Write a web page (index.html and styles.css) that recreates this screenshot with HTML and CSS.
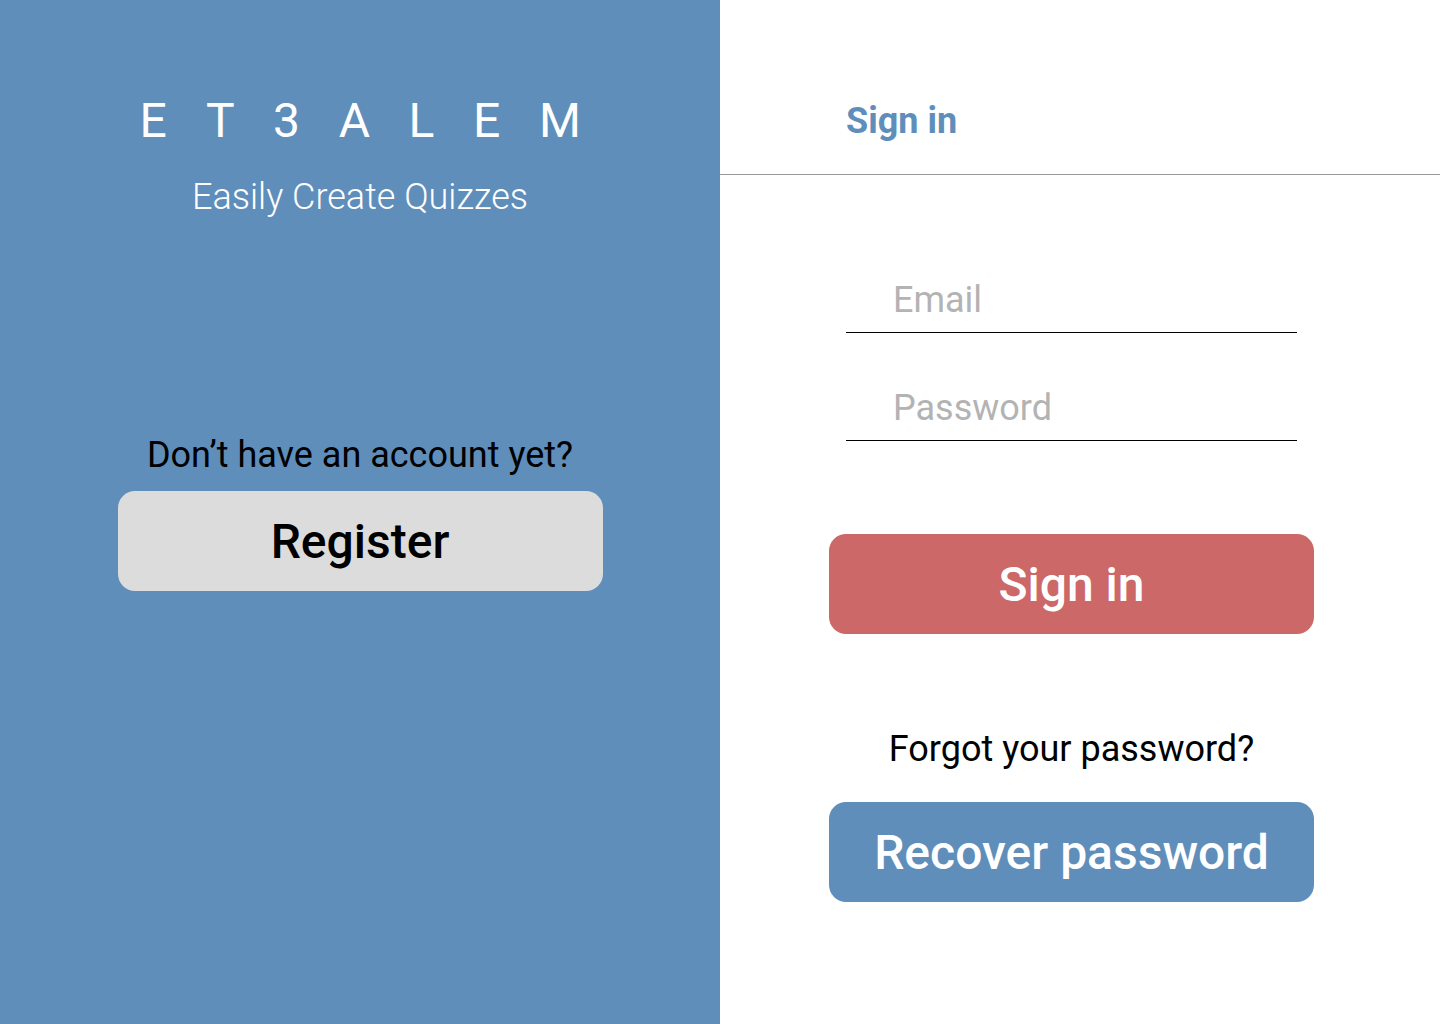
FILE: index.html
```html
<!DOCTYPE html>
<html lang="en">
<head>
<meta charset="utf-8">
<title>ET3ALEM – Sign in</title>
<link rel="stylesheet" href="styles.css">
</head>
<body>
<div class="page">
  <section class="brand">
    <h1 class="logo">ET3ALEM</h1>
    <p class="tagline">Easily Create Quizzes</p>
    <p class="prompt">Don’t have an account yet?</p>
    <button class="btn btn-register" type="button">Register</button>
  </section>
  <section class="auth">
    <header class="auth-header">
      <h2 class="auth-title">Sign in</h2>
    </header>
    <form class="auth-form">
      <input class="field" type="email" placeholder="Email">
      <input class="field field-password" type="password" placeholder="Password">
      <button class="btn btn-signin" type="button">Sign in</button>
      <p class="prompt prompt-forgot">Forgot your password?</p>
      <button class="btn btn-recover" type="button">Recover password</button>
    </form>
  </section>
</div>
</body>
</html>
```
FILE: styles.css
```css
* { box-sizing: border-box; }
html, body { margin: 0; padding: 0; }
body {
  font-family: Roboto, "Liberation Sans", Arial, sans-serif;
  background: #ffffff;
  color: #000;
}
.page {
  display: grid;
  grid-template-columns: 720px 720px;
  width: 1440px;
  height: 1024px;
}
.brand {
  background: #5f8ebb;
  display: flex;
  flex-direction: column;
  align-items: center;
  padding-top: 93px;
}
.logo {
  margin: 0;
  font-size: 48px;
  font-weight: 400;
  line-height: 56px;
  color: #fff;
  letter-spacing: 38.6px;
  text-indent: 39px;
}
.tagline {
  margin: 27px 0 0;
  font-size: 36px;
  font-weight: 300;
  line-height: 42px;
  color: #fff;
}
.prompt {
  margin: 216px 0 0;
  font-size: 36px;
  line-height: 42px;
  font-weight: 400;
  text-align: center;
}
.btn {
  display: flex;
  align-items: center;
  justify-content: center;
  width: 485px;
  height: 100px;
  border: 0;
  border-radius: 17px;
  font-family: inherit;
  font-size: 48px;
  font-weight: 500;
  line-height: normal;
  padding: 0;
  cursor: pointer;
}
.btn-register {
  margin-top: 15px;
  background: #dcdcdc;
  color: #000;
}
.auth {
  display: flex;
  flex-direction: column;
}
.auth-header {
  height: 175px;
  padding: 100px 0 0 126px;
  border-bottom: 1px solid #9a9a9a;
}
.auth-title {
  margin: 0;
  font-size: 36px;
  line-height: 42px;
  font-weight: 700;
  color: #5f8ebb;
}
.auth-form {
  display: flex;
  flex-direction: column;
  align-items: center;
  width: 485px;
  margin: 92px 0 0 109px;
}
.field {
  display: block;
  width: 451px;
  height: 66px;
  padding: 0 0 0 47px;
  border: 0;
  border-bottom: 1px solid #000;
  background: transparent;
  font-family: inherit;
  font-size: 36px;
  color: #000;
  outline: none;
}
.field::placeholder { color: #b3b3b3; }
.field-password { margin-top: 42px; }
.btn-signin {
  margin-top: 93px;
  background: #cd6868;
  color: #fff;
}
.prompt-forgot { margin-top: 94px; }
.btn-recover {
  margin-top: 32px;
  background: #5f8ebb;
  color: #fff;
}
```
